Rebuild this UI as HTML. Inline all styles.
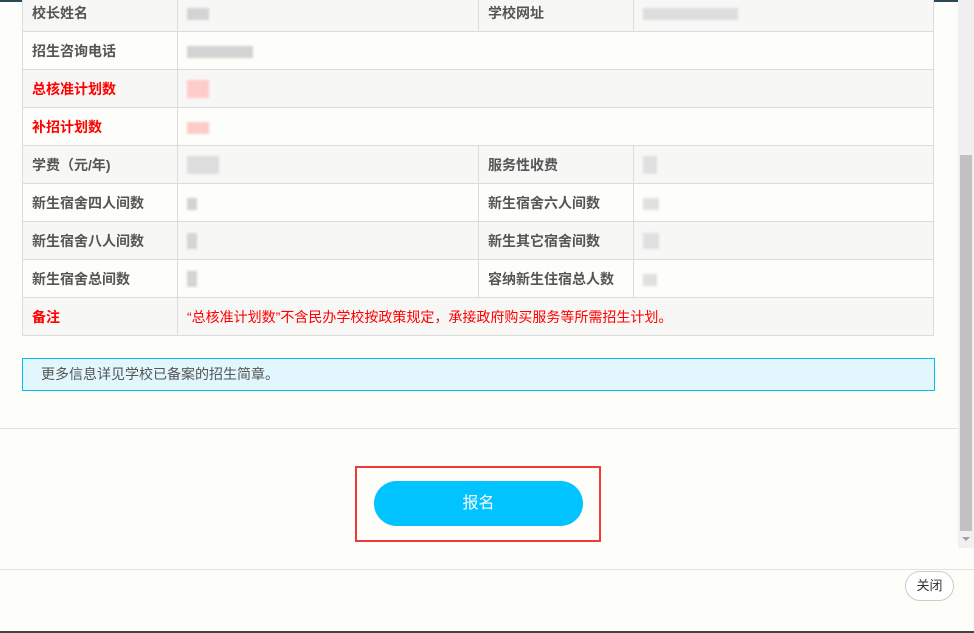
<!DOCTYPE html>
<html><head><meta charset="utf-8"><style>
*{margin:0;padding:0;box-sizing:border-box}
body{width:974px;height:633px;overflow:hidden;background:#fdfdfa;font-family:"Liberation Sans","Noto Sans CJK SC",sans-serif;position:relative}
.top{position:absolute;left:0;top:0;width:974px;height:2px;background:#2c4a55}
.bot{position:absolute;left:0;top:631px;width:974px;height:2px;background:#444}
table{position:absolute;left:22px;top:-7px;width:912px;border-collapse:collapse;font-size:14px;color:#555}
td{border:1px solid #dcdcdc;height:38px;padding:0 9px;vertical-align:middle}
tr.s td{background:#f7f7f5}
td.l{font-weight:bold;width:155px}
td.l2{font-weight:bold;width:155px}
.red{color:#f00}
.blur{display:inline-block;height:12px;background:#d4d4d4;filter:blur(1px);vertical-align:middle}
.info{position:absolute;left:22px;top:358px;width:913px;height:33px;background:#e2f6fd;border:1px solid #00c0f0;font-size:14px;color:#555;padding-left:18px;line-height:31px}
.hl{position:absolute;left:0;width:958px;height:1px;background:#e2e2e2}
.rb{position:absolute;left:355px;top:466px;width:246px;height:76px;border:2px solid #f03a3a}
.btn{position:absolute;left:374px;top:481px;width:209px;height:45px;border-radius:23px;background:#00c3ff;color:#fff;font-size:16px;text-align:center;line-height:45px}
.sb{position:absolute;left:958px;top:0;width:16px;height:548px;background:#f0f0f0}
.th{position:absolute;left:960px;top:155px;width:12px;height:376px;background:#c1c1c1}
.ar{position:absolute;left:962px;top:537px;border-left:4px solid transparent;border-right:4px solid transparent;border-top:4px solid #a0a0a0}
.cl{position:absolute;left:905px;top:571px;width:49px;height:30px;border:1px solid #ccc;border-radius:15px;font-size:13px;color:#333;text-align:center;line-height:28px;background:#fff}
</style></head><body>
<div class="top"></div>
<table>
<tr class="s"><td class="l">校长姓名</td><td style="width:301px"><span class="blur" style="width:22px"></span></td><td class="l2">学校网址</td><td><span class="blur" style="width:95px;background:#ddd"></span></td></tr>
<tr><td class="l">招生咨询电话</td><td colspan="3"><span class="blur" style="width:66px"></span></td></tr>
<tr class="s"><td class="l red">总核准计划数</td><td colspan="3"><span class="blur" style="width:22px;height:18px;background:#fcc"></span></td></tr>
<tr><td class="l red">补招计划数</td><td colspan="3"><span class="blur" style="width:22px;background:#fcc"></span></td></tr>
<tr class="s"><td class="l">学费（元/年)</td><td><span class="blur" style="width:32px;height:18px;background:#ddd"></span></td><td class="l2">服务性收费</td><td><span class="blur" style="width:14px;height:18px;background:#e0e0e0"></span></td></tr>
<tr><td class="l">新生宿舍四人间数</td><td><span class="blur" style="width:10px"></span></td><td class="l2">新生宿舍六人间数</td><td><span class="blur" style="width:16px;background:#e0e0e0"></span></td></tr>
<tr class="s"><td class="l">新生宿舍八人间数</td><td><span class="blur" style="width:10px;height:16px"></span></td><td class="l2">新生其它宿舍间数</td><td><span class="blur" style="width:16px;height:16px;background:#e0e0e0"></span></td></tr>
<tr><td class="l">新生宿舍总间数</td><td><span class="blur" style="width:10px;height:16px"></span></td><td class="l2">容纳新生住宿总人数</td><td><span class="blur" style="width:14px;background:#e0e0e0"></span></td></tr>
<tr class="s"><td class="l red">备注</td><td colspan="3" class="red" style="font-size:14px">“总核准计划数”不含民办学校按政策规定，承接政府购买服务等所需招生计划。</td></tr>
</table>
<div class="info">更多信息详见学校已备案的招生简章。</div>
<div class="hl" style="top:428px"></div>
<div class="rb"></div>
<div class="btn">报名</div>
<div class="sb"></div><div class="th"></div><div class="ar"></div>
<div class="hl" style="top:569px;width:974px"></div>
<div class="cl">关闭</div>
<div class="bot"></div>
</body></html>
